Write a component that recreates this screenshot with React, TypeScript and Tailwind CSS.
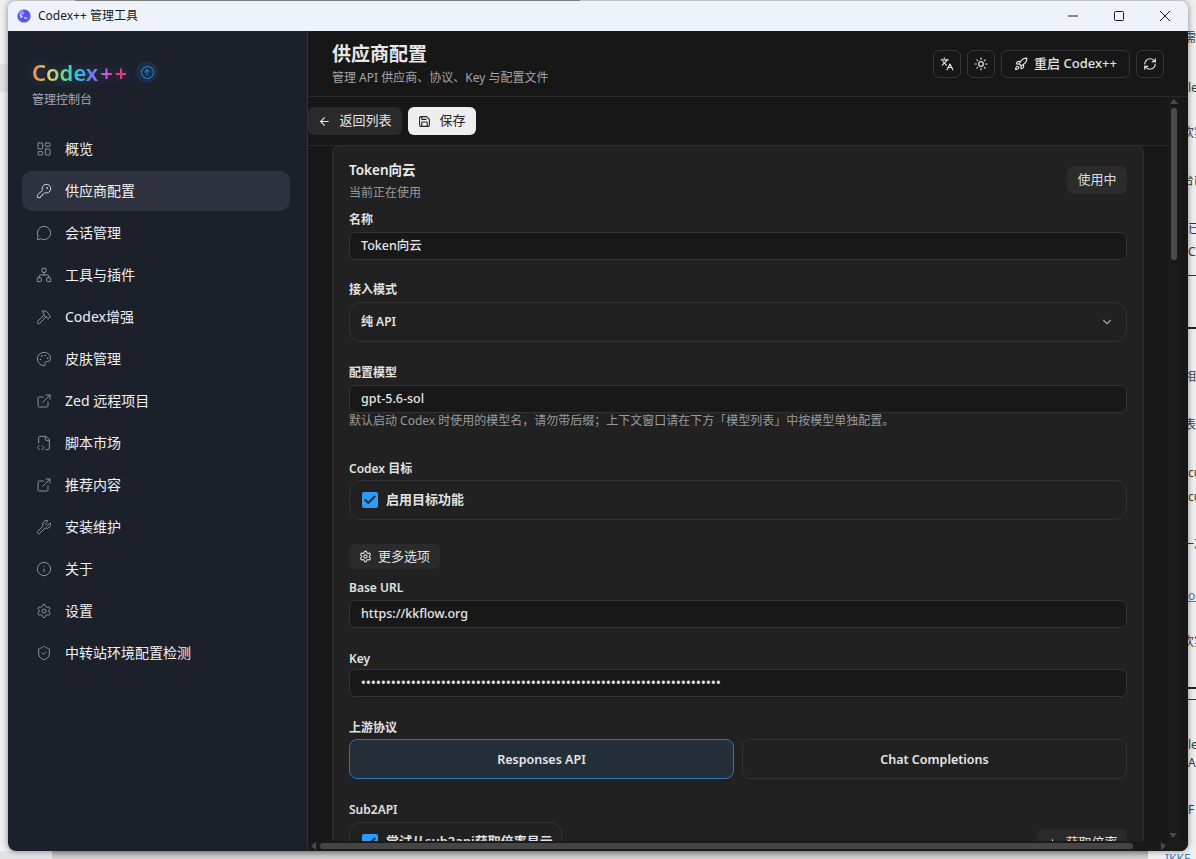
import React from 'react';
import {
  ArrowLeft,
  ArrowUp,
  Check,
  ChevronDown,
  ExternalLink,
  FileCode2,
  Hammer,
  Info,
  KeyRound,
  Languages,
  LayoutDashboard,
  MessageCircle,
  Network,
  Palette,
  Plus,
  RefreshCw,
  Rocket,
  Save,
  Settings,
  ShieldCheck,
  Sun,
  Wrench,
} from 'lucide-react';

const navItems = [
  { label: '概览', icon: LayoutDashboard },
  { label: '供应商配置', icon: KeyRound, active: true },
  { label: '会话管理', icon: MessageCircle },
  { label: '工具与插件', icon: Network },
  { label: 'Codex增强', icon: Hammer },
  { label: '皮肤管理', icon: Palette },
  { label: 'Zed 远程项目', icon: ExternalLink },
  { label: '脚本市场', icon: FileCode2 },
  { label: '推荐内容', icon: ExternalLink },
  { label: '安装维护', icon: Wrench },
  { label: '关于', icon: Info },
  { label: '设置', icon: Settings },
  { label: '中转站环境配置检测', icon: ShieldCheck },
];

// bits of the page behind the window
const behindRight = [
  { pos: 'left-[1184px] top-[32px]', text: '需' },
  { pos: 'left-[1188px] top-[82px]', text: 'le' },
  { pos: 'left-[1182px] top-[127px]', text: '欢实' },
  { pos: 'left-[1182px] top-[175px]', text: '台前' },
  { pos: 'left-[1188px] top-[223px]', text: '已' },
  { pos: 'left-[1188px] top-[246px]', text: 'C' },
  { pos: 'left-[1184px] top-[371px]', text: '相' },
  { pos: 'left-[1184px] top-[419px]', text: '表' },
  { pos: 'left-[1188px] top-[467px]', text: 'cu' },
  { pos: 'left-[1188px] top-[491px]', text: 'cu' },
  { pos: 'left-[1182px] top-[539px]', text: '一次' },
  { pos: 'left-[1182px] top-[636px]', text: '欢实' },
  { pos: 'left-[1188px] top-[739px]', text: 'le' },
  { pos: 'left-[1188px] top-[757px]', text: 'AP' },
  { pos: 'left-[1188px] top-[804px]', text: 'F' },
];

function Label({ children, className = '' }: { children: React.ReactNode; className?: string }) {
  return <div className={`h-[18px] text-xs leading-[20px] font-semibold text-[#e2e2e2] ${className}`}>{children}</div>;
}

function TextInput({ value, className = '' }: { value: string; className?: string }) {
  return (
    <div className={`flex h-7 items-center rounded-md border border-[#333333] bg-[#181818] px-[11px] text-[12.5px] font-medium whitespace-nowrap text-[#e6e6e6] ${className}`}>
      {value}
    </div>
  );
}

function CheckRow({ children, className = '' }: { children: React.ReactNode; className?: string }) {
  return (
    <div className={`flex h-10 items-center gap-2 rounded-xl border border-[#323232] px-3 text-[13px] font-semibold whitespace-nowrap text-[#e2e2e2] ${className}`}>
      <span className="flex h-4 w-4 shrink-0 items-center justify-center rounded-[2px] bg-[#2f9bf7]">
        <Check size={14} strokeWidth={3.5} className="text-[#2b2f36]" />
      </span>
      {children}
    </div>
  );
}

function IconButton({ children }: { children: React.ReactNode }) {
  return (
    <button className="flex h-7 w-7 items-center justify-center rounded-md border border-[#363636] text-[#e4e4e4]">
      {children}
    </button>
  );
}

export default function App() {
  return (
    <div className="relative h-[859px] w-[1196px] overflow-hidden bg-[#f0f0f0] font-['Noto_Sans','Noto_Sans_CJK_SC',sans-serif]">
      {/* page behind the window */}
      <div className="absolute left-[75px] top-0 h-px w-[505px] bg-[#a0a0a0]" />
      <div className="absolute left-0 top-[64px] h-[28px] w-[8px] bg-[#e2e2e2]" />
      <div className="absolute left-0 top-[851px] h-[8px] w-[52px] bg-[#dfe2e6]" />
      <div className="absolute left-[52px] top-[851px] h-[8px] w-[1096px] bg-gradient-to-b from-[#a8a8a8] to-[#d8d8d8]" />
      <div className="absolute left-[1165px] top-[853px] text-xs leading-none text-[#3b7fc4]">IKKF</div>
      <div className="absolute left-[1188px] top-[275px] h-px w-[8px] bg-[#333333]" />
      <div className="absolute left-[1188px] top-[327px] h-[2px] w-[8px] bg-[#222222]" />
      <div className="absolute left-[1188px] top-[687px] h-[2px] w-[8px] bg-[#222222]" />
      <div className="absolute left-[1188px] top-[699px] h-px w-[8px] bg-[#333333]" />
      <div className="absolute left-[1188px] top-[590px] text-xs leading-none text-[#3b7fc4] underline">oc</div>
      {behindRight.map((b) => (
        <div key={b.pos} className={`absolute ${b.pos} text-xs leading-none whitespace-nowrap text-[#3a3a3a]`}>
          {b.text}
        </div>
      ))}

      {/* app window */}
      <div className="absolute left-[8px] top-[1px] flex h-[850px] w-[1180px] flex-col overflow-hidden rounded-lg shadow-[0_0_6px_rgba(0,0,0,0.45)]">
        <div className="flex h-[30px] shrink-0 items-center bg-[#eef3fb] pl-[9px]">
          <svg width="14" height="14" viewBox="0 0 14 14">
            <circle cx="7" cy="7" r="6.6" fill="#5b55f0" />
            <circle cx="4.5" cy="3.8" r="2.6" fill="#9a8cf5" />
            <path d="M3 6.2 5 7.5 3 8.8M7 9h3.4" stroke="#ffffff" strokeWidth="1.2" fill="none" />
          </svg>
          <span className="ml-[7px] text-xs text-[#1a1a1a]">Codex++ 管理工具</span>
          <div className="ml-auto flex items-center gap-9 pr-[18px] text-[#1a1a1a]">
            <svg width="10" height="10" viewBox="0 0 10 10"><path d="M0 5h10" stroke="currentColor" /></svg>
            <svg width="10" height="10" viewBox="0 0 10 10"><rect x=".5" y=".5" width="9" height="9" rx="1" fill="none" stroke="currentColor" /></svg>
            <svg width="10" height="10" viewBox="0 0 10 10"><path d="M0 0l10 10M10 0L0 10" stroke="currentColor" /></svg>
          </div>
        </div>

        <div className="flex min-h-0 flex-1">
          {/* sidebar */}
          <aside className="flex w-[300px] shrink-0 flex-col border-r border-[#2e3138] bg-[#1c202b]">
            <div className="pl-[24px] pt-[25px]">
              <div className="flex items-center">
                <span className="w-[94px] bg-[linear-gradient(90deg,#ef9a4c_6%,#dbdc6a_20%,#5fdc8a_33%,#25cfe0_47%,#6a80f8_62%,#c45ce8_78%,#f0357f_93%)] bg-clip-text text-[22px] leading-[32px] font-semibold whitespace-nowrap text-transparent [filter:drop-shadow(0_0_5px_rgba(120,160,255,0.25))]">
                  Codex<span className="ml-[2px] tracking-[2px]">++</span>
                </span>
                <span className="ml-[10px] flex h-[22px] w-[22px] items-center justify-center rounded-full bg-[#19304b]">
                  <span className="flex h-[13px] w-[13px] items-center justify-center rounded-full border border-[#2b8ae6]">
                    <ArrowUp size={8} strokeWidth={3} className="text-[#2b8ae6]" />
                  </span>
                </span>
              </div>
              <div className="mt-[3px] text-xs leading-[18px] text-[#a7abb3]">管理控制台</div>
            </div>
            <nav className="ml-[14px] mr-[17px] mt-[20px] flex flex-col gap-[2px]">
              {navItems.map((item) => {
                const Icon = item.icon;
                return (
                  <div
                    key={item.label}
                    className={`flex h-10 items-center gap-[13px] rounded-[10px] px-[14px] text-sm text-[#eef0f3] ${item.active ? 'bg-[#2e323e]' : ''}`}
                  >
                    <Icon size={16} strokeWidth={1.5} className={item.active ? 'text-[#d5d7dc]' : 'text-[#8e9199]'} />
                    <span>{item.label}</span>
                  </div>
                );
              })}
            </nav>
          </aside>

          {/* main */}
          <main className="flex min-w-0 flex-1 flex-col bg-[#171717]">
            <header className="flex h-[66px] shrink-0 items-center justify-between border-b border-[#2b2b2b] pl-[24px] pr-[24px]">
              <div className="pt-[2px]">
                <h1 className="text-[19px] leading-[24px] font-bold text-[#e8e8e8]">供应商配置</h1>
                <p className="mt-[3px] text-xs leading-[18px] text-[#a5a5a5]">管理 API 供应商、协议、Key 与配置文件</p>
              </div>
              <div className="flex items-center gap-[6px]">
                <IconButton><Languages size={14} /></IconButton>
                <IconButton><Sun size={14} /></IconButton>
                <button className="flex h-7 w-[129px] items-center justify-center gap-[6px] rounded-md border border-[#363636] text-[13px] font-medium text-[#e4e4e4]">
                  <Rocket size={14} />
                  重启 Codex++
                </button>
                <IconButton><RefreshCw size={14} /></IconButton>
              </div>
            </header>

            <div className="relative min-h-0 flex-1 overflow-hidden">
              <div className="mr-[20px] flex h-[49px] items-center gap-[6px] border-b border-[#2b2b2b]">
                <button className="flex h-7 w-[94px] items-center justify-center gap-2 rounded-md bg-[#2a2a2a] text-[13px] text-[#e6e6e6]">
                  <ArrowLeft size={13} />
                  返回列表
                </button>
                <button className="flex h-7 w-[68px] items-center justify-center gap-2 rounded-md bg-[#eeeeee] text-[13px] text-[#222222]">
                  <Save size={13} />
                  保存
                </button>
              </div>

              <section className="-mt-px ml-[24px] h-[800px] w-[812px] rounded-t-lg border border-b-0 border-[#2e2e2e] bg-[#212121] px-[16px]">
                <div className="flex items-start justify-between pt-[14px]">
                  <div>
                    <div className="text-[13.5px] leading-[20px] font-semibold text-[#ececec]">Token向云</div>
                    <div className="mt-[3px] text-xs leading-[20px] text-[#9a9a9a]">当前正在使用</div>
                  </div>
                  <span className="mt-[6px] flex h-7 w-[60px] items-center justify-center rounded-md bg-[#2b2b2b] text-[13px] text-[#dcdcdc]">使用中</span>
                </div>

                <Label className="mt-[7px]">名称</Label>
                <TextInput className="mt-1" value="Token向云" />

                <Label className="mt-5">接入模式</Label>
                <div className="mt-1 flex h-10 items-center justify-between rounded-xl border border-[#323232] px-[11px] text-xs font-semibold text-[#e2e2e2]">
                  纯 API
                  <ChevronDown size={14} className="mr-px text-[#a0a0a0]" />
                </div>

                <Label className="mt-[21px]">配置模型</Label>
                <TextInput className="mt-1" value="gpt-5.6-sol" />
                <p className="-mt-px text-xs leading-[18px] text-[#9a9a9a]">默认启动 Codex 时使用的模型名，请勿带后缀；上下文窗口请在下方「模型列表」中按模型单独配置。</p>

                <Label className="mt-[29px]">Codex 目标</Label>
                <CheckRow className="mt-[3px]">启用目标功能</CheckRow>

                <button className="mt-[24px] flex h-[25px] w-[91px] items-center justify-center gap-[6px] rounded-md bg-[#2a2a2a] text-[13px] text-[#e2e2e2]">
                  <Settings size={13} />
                  更多选项
                </button>

                <Label className="mt-[9px]">Base URL</Label>
                <TextInput className="mt-1" value="https://kkflow.org" />

                <Label className="mt-[21px]">Key</Label>
                <TextInput className="mt-[2px] tracking-[0.3px]" value={'•'.repeat(72)} />

                <Label className="mt-[21px]">上游协议</Label>
                <div className="mt-[3px] grid grid-cols-2 gap-2">
                  <button className="h-10 rounded-lg border border-[#2f74b5] bg-[#242e39] pt-[3px] text-[12.5px] font-semibold text-[#e6e6e6]">Responses API</button>
                  <button className="h-10 rounded-lg border border-[#323232] pt-[3px] text-[12.5px] font-semibold text-[#e6e6e6]">Chat Completions</button>
                </div>

                <Label className="mt-[21px]">Sub2API</Label>
                <div className="mt-1 flex items-start justify-between">
                  <CheckRow className="w-[213px]">尝试从sub2api获取倍率显示</CheckRow>
                  <button className="mt-[7px] flex h-7 w-[90px] items-center justify-center gap-[6px] rounded-md bg-[#2a2a2a] text-[13px] text-[#e2e2e2]">
                    <Plus size={13} />
                    获取倍率
                  </button>
                </div>
              </section>

              {/* scrollbars */}
              <div className="absolute right-0 top-0 bottom-0 w-[8px] bg-[#171717]" />
              <div className="absolute right-[8px] top-0 bottom-0 flex w-[13px] flex-col items-center bg-[#1a1a1a]">
                <span className="mt-[2px] h-0 w-0 border-x-[4px] border-b-[5px] border-x-transparent border-b-[#4a4a4a]" />
                <span className="mt-[4px] h-[152px] w-[6px] rounded-full bg-[#4a4a4a]" />
              </div>
              <div className="absolute inset-x-0 bottom-0 flex h-[10px] items-center bg-[#1a1a1a]">
                <span className="ml-[3px] h-0 w-0 border-y-[4px] border-r-[5px] border-y-transparent border-r-[#4a4a4a]" />
                <span className="ml-[4px] h-[6px] w-[813px] rounded-full bg-[#454545]" />
                <span className="ml-[28px] h-0 w-0 border-y-[4px] border-l-[5px] border-y-transparent border-l-[#4a4a4a]" />
              </div>
              <span className="absolute right-[11px] bottom-[13px] h-0 w-0 border-x-[4px] border-t-[5px] border-x-transparent border-t-[#4a4a4a]" />
            </div>
          </main>
        </div>
      </div>
    </div>
  );
}
